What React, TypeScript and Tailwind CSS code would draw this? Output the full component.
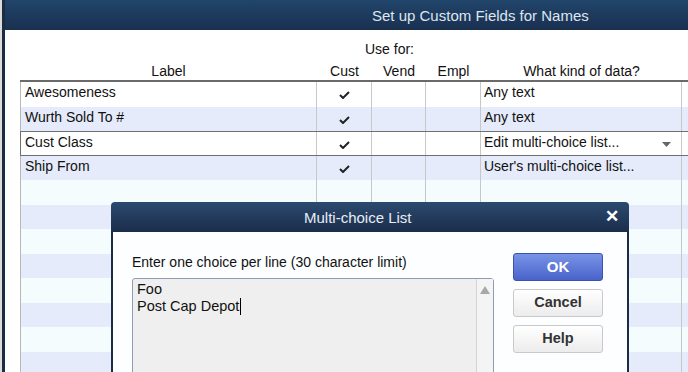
import React from 'react'

const font = { fontFamily: '"Liberation Sans", Arial, sans-serif' }

type Row = { label: string; cust: boolean; kind: string; selected?: boolean; arrow?: boolean }

const rows: Row[] = [
  { label: 'Awesomeness', cust: true, kind: 'Any text' },
  { label: 'Wurth Sold To #', cust: true, kind: 'Any text' },
  { label: 'Cust Class', cust: true, kind: 'Edit multi-choice list...', selected: true, arrow: true },
  { label: 'Ship From', cust: true, kind: "User's multi-choice list..." },
  { label: '', cust: false, kind: '' },
  { label: '', cust: false, kind: '' },
  { label: '', cust: false, kind: '' },
  { label: '', cust: false, kind: '' },
  { label: '', cust: false, kind: '' },
  { label: '', cust: false, kind: '' },
  { label: '', cust: false, kind: '' },
  { label: '', cust: false, kind: '' },
]

const grid = 'grid grid-cols-[297px_55px_54px_55px_201px_1fr]'

function Check() {
  return (
    <svg width="11" height="8" viewBox="0 0 11 8">
      <path d="M1 4 L4 7 L10 1" fill="none" stroke="#222" strokeWidth="2" />
    </svg>
  )
}

function TableRow({ row, index }: { row: Row; index: number }) {
  const striped = index % 2 === 1
  const bg = striped ? 'bg-[#e5ebfa]' : index > 3 ? 'bg-[#f5fcfe]' : 'bg-white'
  const edge = row.selected ? 'border-y border-[#6f6f6f]' : ''
  const left = row.selected ? 'border-[#6f6f6f]' : 'border-[#b8b8b8]'
  return (
    <div className={`${grid} h-[24.5px] ${bg} ${edge} text-[14px] leading-[16px] text-[#111]`}>
      <div className={`border-l border-r border-r-[#c8c8c8] ${left} pl-[4px] pt-[2px]`}>{row.label}</div>
      <div className="border-r border-[#c8c8c8] flex justify-center pt-[9px]">{row.cust && <Check />}</div>
      <div className="border-r border-[#c8c8c8]" />
      <div className="border-r border-[#c8c8c8]" />
      <div className="border-r border-[#c8c8c8] pl-[3px] pt-[2px] flex justify-between pr-[10px]">
        <span>{row.kind}</span>
        {row.arrow && (
          <svg width="9" height="5" viewBox="0 0 9 5" className="mt-[8px]">
            <path d="M0 0 L9 0 L4.5 5 Z" fill="#666" />
          </svg>
        )}
      </div>
      <div />
    </div>
  )
}

function Dialog() {
  return (
    <div className="absolute left-[111px] top-[202px] w-[518px] h-[200px]">
      <div className="h-[30px] rounded-t-[4px] bg-linear-to-b from-[#2b4a70] to-[#1b2d4a] flex items-center relative">
        <span className="pl-[193px] text-[15px] leading-[17px] text-[#e6edf5]">Multi-choice List</span>
        <span className="absolute right-[10px] top-[6px] text-[17px] leading-[18px] font-bold text-white">✕</span>
      </div>
      <div className="h-[170px] border-x-2 border-[#1c2b45] bg-[#fcfeff] flex">
        <div className="pl-[19px] pt-[22px]">
          <div className="text-[14px] leading-[16px] text-[#111]">Enter one choice per line (30 character limit)</div>
          <div className="mt-[8px] w-[362px] h-[120px] border border-[#8e9cb9] rounded-[3px] bg-[#efefef] flex">
            <div className="flex-1 pl-[4px] pt-[2px] text-[14.5px] leading-[17px] text-[#111]">
              <div>Foo</div>
              <div className="flex items-center">
                Post Cap Depot
                <span className="inline-block w-[1px] h-[17px] bg-black ml-[1px]" />
              </div>
            </div>
            <div className="w-[17px] border-l border-[#d4d4d4] bg-[#f4f4f4] flex justify-center pt-[7px]">
              <svg width="10" height="8" viewBox="0 0 10 8">
                <path d="M0 8 L5 0 L10 8 Z" fill="#a8a8a8" />
              </svg>
            </div>
          </div>
        </div>
        <div className="pl-[19px] pt-[21px] flex flex-col gap-[8px]">
          <div className="w-[90px] h-[28px] rounded-[3px] border border-[#3d52b0] bg-linear-to-b from-[#7894e6] to-[#4a62ca] flex items-center justify-center text-[15px] font-bold text-white">
            OK
          </div>
          <div className="w-[90px] h-[28px] rounded-[3px] border border-[#c9c9c9] bg-linear-to-b from-white to-[#ececec] flex items-center justify-center text-[14.5px] font-bold text-[#333]">
            Cancel
          </div>
          <div className="w-[90px] h-[28px] rounded-[3px] border border-[#c9c9c9] bg-linear-to-b from-white to-[#ececec] flex items-center justify-center text-[14.5px] font-bold text-[#333]">
            Help
          </div>
        </div>
      </div>
    </div>
  )
}

export default function App() {
  return (
    <div style={font} className="relative w-[688px] h-[372px] overflow-hidden flex bg-white">
      <div className="w-[2px] shrink-0 bg-[#dcdcdc]" />
      <div className="w-[3px] shrink-0 bg-[#1d2c43]" />
      <div className="flex-1">
        <div className="h-[30px] bg-linear-to-b from-[#21456b] to-[#1a3050] flex items-center">
          <span className="pl-[367px] text-[15px] leading-[17px] text-[#dde6f0]">Set up Custom Fields for Names</span>
        </div>
        <div className="pt-[11px] pl-[360px] h-[33px] text-[14px] leading-[16px] text-[#111]">Use for:</div>
        <div className={`${grid} ml-[15px] h-[17px] text-[14px] leading-[16px] text-[#111] text-center`}>
          <div>Label</div>
          <div>Cust</div>
          <div>Vend</div>
          <div>Empl</div>
          <div>What kind of data?</div>
          <div />
        </div>
        <div className="ml-[15px] h-[2px] bg-[#6a6a6a]" />
        <div className="ml-[15px]">
          {rows.map((r, i) => (
            <TableRow key={'row-' + i} row={r} index={i} />
          ))}
        </div>
      </div>
      <Dialog />
    </div>
  )
}
